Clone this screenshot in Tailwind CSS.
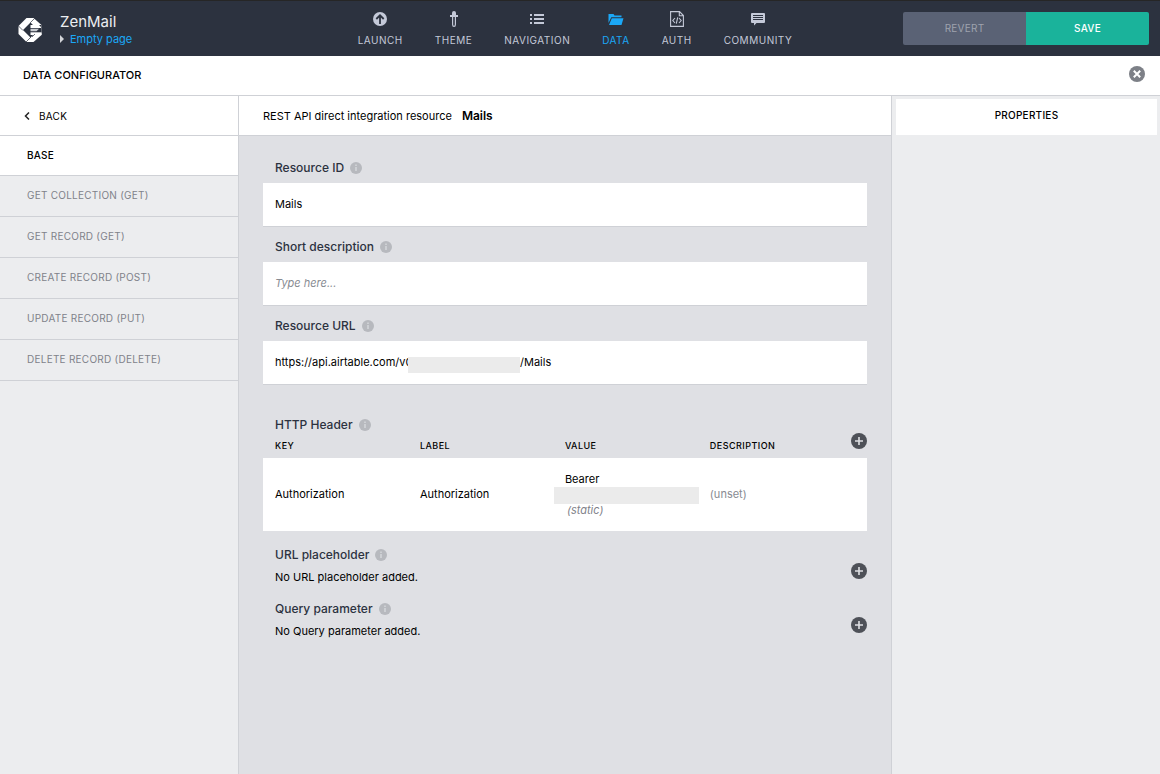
<!DOCTYPE html>
<html lang="en">
<head>
<meta charset="utf-8">
<meta name="viewport" content="width=device-width, initial-scale=1">
<title>ZenMail – Data configurator</title>
<script src="https://cdn.jsdelivr.net/npm/@tailwindcss/browser@4"></script>
</head>
<body class="flex min-h-screen flex-col bg-[#ecedef] font-['Inter','Open_Sans',sans-serif] text-[11px] leading-4 text-black">
<svg class="hidden" aria-hidden="true">
  <symbol id="info" viewBox="0 0 12 12"><circle cx="6" cy="6" r="6" fill="#b7b9be"/><path d="M5.1 2.5h1.8v1.4H5.1zM5.1 4.9h1.8v4.2H5.1z" fill="#d0d2d6"/></symbol>
  <symbol id="plus" viewBox="0 0 16 16"><circle cx="8" cy="8" r="8" fill="#4e5158"/><path d="M8 4v8M4 8h8" stroke="#dfe0e4" stroke-width="1.6"/></symbol>
</svg>

<header class="flex h-14 items-center justify-between border-t border-[#262626] bg-[#2c323f]">
  <div class="flex w-80 items-center pt-0.5 pl-[18px]">
    <svg class="h-6 w-6" viewBox="0 0 24 24" aria-hidden="true">
      <path d="M8.500 0H15.500L23.500 7V17L15.500 24H8.500L.5 16V8z" fill="#fff"/>
      <path d="M12.500 4.500 5 12l7.500 7.500 5-4.500H23.500V7H15z" fill="#2c323f"/>
      <path d="M12.500 7h8.500l2 2v1H12.500z" fill="#fff"/>
      <path d="M12.500 10.800H21l-2.500 2.500h-6z" fill="#c9ccd1"/>
      <path d="M12.500 14.300h11v2.700h-11z" fill="#fff"/>
      <path d="M0 7.500 5 12.500M8 24l5-5M12.200 4.800 16.500.5M14 19l3-3" stroke="#2c323f" stroke-width=".7"/>
    </svg>
    <div class="ml-[18px]">
      <h1 class="text-[15px] leading-[18px] text-[#eceef1]">ZenMail</h1>
      <a href="#" class="flex items-center gap-1.5 leading-4 text-[#1ba8f7]">
        <svg class="h-2 w-1" viewBox="0 0 4 8" aria-hidden="true"><path d="M0 0l4 4-4 4z" fill="#d3d5da"/></svg>Empty page</a>
    </div>
  </div>
  <nav class="flex items-end gap-8 text-[10px] leading-3 tracking-wider text-[#c4c9d8]" aria-label="Main">
    <a href="#" class="flex flex-col items-center gap-[7px]">
      <svg class="h-4 w-4" viewBox="0 0 16 16" aria-hidden="true"><circle cx="8" cy="8" r="7" fill="currentColor"/><path d="M8 13V4.500M4.300 8 8 4.300 11.700 8" fill="none" stroke="#2c323f" stroke-width="1.800"/></svg>LAUNCH</a>
    <a href="#" class="flex flex-col items-center gap-[7px]">
      <svg class="h-4 w-4" viewBox="0 0 16 16" aria-hidden="true"><path d="M6 2q0-2 2-2t2 2v2h2v2H4V4h2z" fill="currentColor"/><path d="M6.600 6v7.500Q6.600 15.400 8 15.400t1.400-1.900V6" fill="none" stroke="currentColor" stroke-width="1.200"/></svg>THEME</a>
    <a href="#" class="flex flex-col items-center gap-[7px]">
      <svg class="h-4 w-4" viewBox="0 0 16 16" aria-hidden="true"><path d="M1 3h2v2H1zM5 3h10v2H5zM1 7h2v2H1zM5 7h10v2H5zM1 11h2v2H1zM5 11h10v2H5z" fill="currentColor"/></svg>NAVIGATION</a>
    <a href="#" aria-current="page" class="flex flex-col items-center gap-[7px] text-[#1ba8f7]">
      <svg class="h-4 w-4" viewBox="0 0 16 16" aria-hidden="true"><path d="M.5 3h5l1 1.500h7V6.300H3.300L.5 12zM3.800 7.200H15.500L13.500 14H1z" fill="currentColor"/></svg>DATA</a>
    <a href="#" class="flex flex-col items-center gap-[7px]">
      <svg class="h-4 w-4" viewBox="0 0 16 16" aria-hidden="true"><path d="M1.600.6h8.900l3.900 3.900v10.900H1.600zM10.300.8v3.900h4M6 7l-2.200 2.500L6 12M10 7l2.200 2.500L10 12M8.700 6.300 7.300 12.700" fill="none" stroke="currentColor" stroke-width="1.100"/></svg>AUTH</a>
    <a href="#" class="flex flex-col items-center gap-[7px]">
      <svg class="h-4 w-4" viewBox="0 0 16 16" aria-hidden="true"><path d="M1 3q0-1 1-1h12q1 0 1 1v8q0 1-1 1H6.500L4 14.500V12H2q-1 0-1-1z" fill="currentColor"/><path d="M3 4.500h10M3 6.500h10M3 8.500h10" stroke="#2c323f"/></svg>COMMUNITY</a>
  </nav>
  <div class="flex w-[330px] justify-end pr-[11px] text-[10px] tracking-wide">
    <button type="button" class="h-[33px] w-[123px] rounded-l-xs bg-[#5a6275] pb-px text-[#9fa3ae]">REVERT</button>
    <button type="button" class="h-[33px] w-[123px] rounded-r-xs bg-[#1ab39b] pb-px font-medium text-white">SAVE</button>
  </div>
</header>

<div class="flex h-10 items-center justify-between border-b border-[#cfd1d6] bg-white pr-[15px] pb-0.5 pl-[23px]">
  <h2 class="text-[11px] font-medium">DATA CONFIGURATOR</h2>
  <button type="button" aria-label="Close" class="-mt-0.5">
    <svg class="h-4 w-4" viewBox="0 0 16 16" aria-hidden="true"><circle cx="8" cy="8" r="8" fill="#7d8087"/><path d="M4.800 4.800l6.400 6.400M11.200 4.800l-6.400 6.400" stroke="#fff" stroke-width="2"/></svg>
  </button>
</div>

<div class="flex flex-1">
  <nav class="w-[239px] shrink-0 border-r border-[#cfd1d6] text-[10px] tracking-wide text-[#7f828a]" aria-label="Resource sections">
    <a href="#" class="flex h-10 items-center gap-[9px] border-b border-[#cfd1d6] bg-white pl-6 text-black">
      <svg class="h-2 w-1.5" viewBox="0 0 6 8" aria-hidden="true"><path d="M5 .5 1.500 4 5 7.500" fill="none" stroke="#222" stroke-width="1.500"/></svg>BACK</a>
    <a href="#" aria-current="true" class="flex h-10 items-center border-b border-[#cfd1d6] bg-white pb-0.5 pl-[27px] font-medium text-black">BASE</a>
    <a href="#" class="flex h-[41px] items-center border-b border-[#cfd1d6] pb-0.5 pl-[27px]">GET COLLECTION (GET)</a>
    <a href="#" class="flex h-[41px] items-center border-b border-[#cfd1d6] pb-0.5 pl-[27px]">GET RECORD (GET)</a>
    <a href="#" class="flex h-[41px] items-center border-b border-[#cfd1d6] pb-0.5 pl-[27px]">CREATE RECORD (POST)</a>
    <a href="#" class="flex h-[41px] items-center border-b border-[#cfd1d6] pb-0.5 pl-[27px]">UPDATE RECORD (PUT)</a>
    <a href="#" class="flex h-[41px] items-center border-b border-[#cfd1d6] pb-0.5 pl-[27px]">DELETE RECORD (DELETE)</a>
  </nav>

  <main class="min-w-0 flex-1 bg-[#dfe0e4]">
    <div class="flex h-10 items-center gap-2.5 border-b border-[#cfd1d6] bg-white px-6">
      <span>REST API direct integration resource</span><strong class="text-xs font-semibold">Mails</strong>
    </div>
    <form class="px-6 pt-3">
      <div class="flex h-[35px] items-center gap-1.5 pt-[5px] pl-3 text-xs font-medium text-[#2c323f]"><label for="rid">Resource ID</label><svg class="h-3 w-3" aria-hidden="true"><use href="#info"/></svg></div>
      <input id="rid" type="text" value="Mails" class="block h-11 w-full border-b border-[#cfd1d6] bg-white px-3 pb-0.5 outline-none">

      <div class="flex h-[35px] items-center gap-1.5 pt-[5px] pl-3 text-xs font-medium text-[#2c323f]"><label for="desc">Short description</label><svg class="h-3 w-3" aria-hidden="true"><use href="#info"/></svg></div>
      <input id="desc" type="text" placeholder="Type here..." class="block h-11 w-full border-b border-[#cfd1d6] bg-white px-3 pb-0.5 outline-none placeholder:text-[#888b92] placeholder:italic">

      <div class="flex h-[35px] items-center gap-1.5 pt-[5px] pl-3 text-xs font-medium text-[#2c323f]"><label for="url">Resource URL</label><svg class="h-3 w-3" aria-hidden="true"><use href="#info"/></svg></div>
      <div class="flex h-11 items-center border-b border-[#cfd1d6] bg-white pb-0.5 pl-3">
        <input id="url" type="text" value="https://api.airtable.com/v0" class="w-[133px] outline-none">
        <span class="mt-1.5 h-4 w-28 bg-[#ebebeb]"></span>
        <input type="text" aria-label="Resource URL path" value="/Mails" class="min-w-0 flex-1 outline-none">
      </div>

      <section class="relative mt-8">
        <h3 class="flex h-4 items-center gap-1.5 pl-3 text-xs font-medium text-[#2c323f]">HTTP Header<svg class="h-3 w-3" aria-hidden="true"><use href="#info"/></svg></h3>
        <table class="w-full table-fixed text-left">
          <colgroup><col class="w-[24%]"><col class="w-[24%]"><col class="w-[24%]"><col></colgroup>
          <thead class="text-[9px] leading-4 tracking-wider">
            <tr class="h-[25px]"><th class="pl-3 font-medium">KEY</th><th class="pl-3 font-medium">LABEL</th><th class="pl-3 font-medium">VALUE</th><th class="pl-3 font-medium">DESCRIPTION</th></tr>
          </thead>
          <tbody class="bg-white">
            <tr class="h-[73px]">
              <td class="pb-0.5 pl-3">Authorization</td>
              <td class="pb-0.5 pl-3">Authorization</td>
              <td class="pb-0.5"><div class="pl-3 leading-[15px]">Bearer</div><div class="-mr-px ml-px h-[17px] bg-[#ebebeb]"></div><div class="pl-3.5 leading-3 text-[#7f828a] italic">(static)</div></td>
              <td class="pb-0.5 pl-3 text-[#888b92]">(unset)</td>
            </tr>
          </tbody>
        </table>
        <button type="button" aria-label="Add HTTP header" class="absolute top-4 right-0"><svg class="h-4 w-4" aria-hidden="true"><use href="#plus"/></svg></button>
      </section>

      <section class="mt-4 flex items-center justify-between pl-3">
        <div>
          <h3 class="flex h-4 items-center gap-1.5 text-xs font-medium text-[#2c323f]">URL placeholder<svg class="h-3 w-3" aria-hidden="true"><use href="#info"/></svg></h3>
          <p class="mt-1.5">No URL placeholder added.</p>
        </div>
        <button type="button" aria-label="Add URL placeholder" class="mt-2.5"><svg class="h-4 w-4" aria-hidden="true"><use href="#plus"/></svg></button>
      </section>

      <section class="mt-4 flex items-center justify-between pl-3">
        <div>
          <h3 class="flex h-4 items-center gap-1.5 text-xs font-medium text-[#2c323f]">Query parameter<svg class="h-3 w-3" aria-hidden="true"><use href="#info"/></svg></h3>
          <p class="mt-1.5">No Query parameter added.</p>
        </div>
        <button type="button" aria-label="Add query parameter" class="mt-2.5"><svg class="h-4 w-4" aria-hidden="true"><use href="#plus"/></svg></button>
      </section>
    </form>
  </main>

  <aside class="w-[269px] shrink-0 border-l border-[#cfd1d6] py-[3px] pr-[3px] pl-1">
    <h2 class="flex h-9 items-center justify-center bg-white pb-1 text-[10px] font-medium tracking-wide">PROPERTIES</h2>
  </aside>
</div>
</body>
</html>
